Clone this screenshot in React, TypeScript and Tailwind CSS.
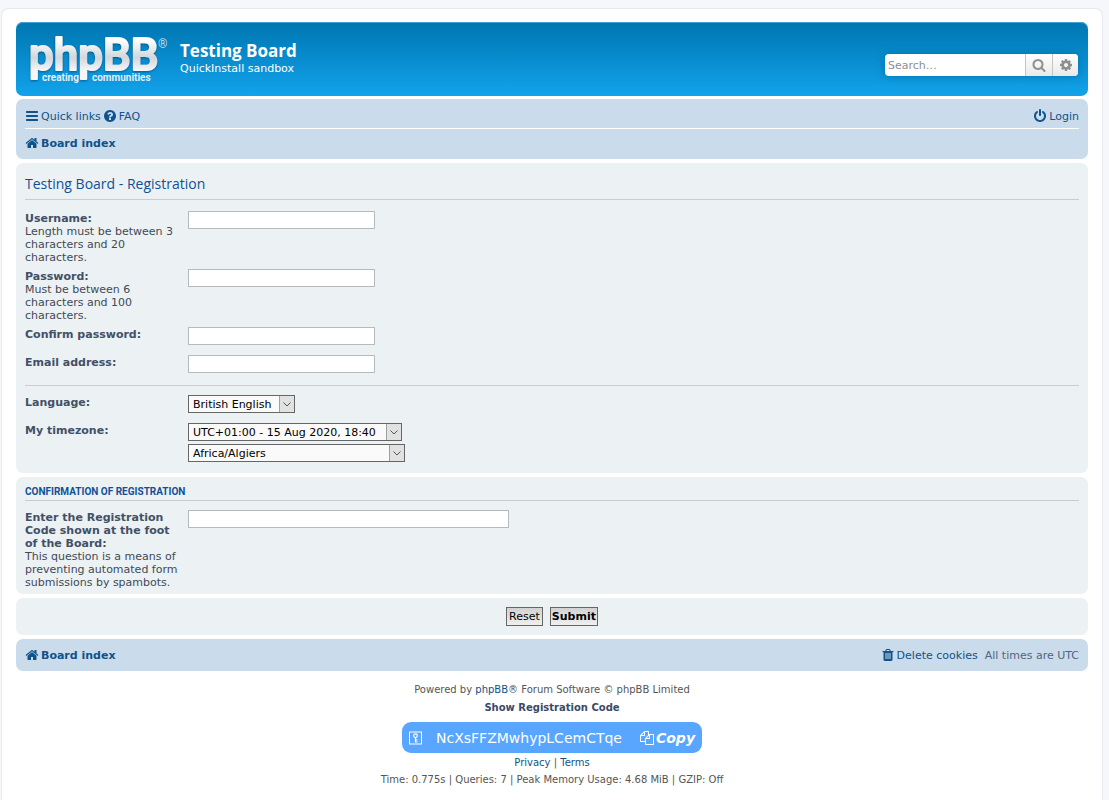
import React from "react";

const ICONS = {
  bars: "M1664 1344v128q0 26-19 45t-45 19h-1408q-26 0-45-19t-19-45v-128q0-26 19-45t45-19h1408q26 0 45 19t19 45zm0-512v128q0 26-19 45t-45 19h-1408q-26 0-45-19t-19-45v-128q0-26 19-45t45-19h1408q26 0 45 19t19 45zm0-512v128q0 26-19 45t-45 19h-1408q-26 0-45-19t-19-45v-128q0-26 19-45t45-19h1408q26 0 45 19t19 45z",
  home: "M1472 992v480q0 26-19 45t-45 19h-384v-384h-256v384h-384q-26 0-45-19t-19-45v-480q0-1 .5-3t.5-3l575-474 575 474q1 2 1 6zm223-69l-62 74q-8 9-21 11h-3q-13 0-21-7l-692-577-692 577q-12 8-24 7-13-2-21-11l-62-74q-8-10-7-23.5t11-21.5l719-599q32-26 76-26t76 26l244 204v-195q0-14 9-23t23-9h192q14 0 23 9t9 23v408l219 182q10 8 11 21.5t-7 23.5z",
  search: "M1216 832q0-185-131.5-316.5t-316.5-131.5-316.5 131.5-131.5 316.5 131.5 316.5 316.5 131.5 316.5-131.5 131.5-316.5zm512 832q0 52-38 90t-90 38q-54 0-90-38l-343-342q-179 124-399 124-143 0-273.5-55.5t-225-150-150-225-55.5-273.5 55.5-273.5 150-225 225-150 273.5-55.5 273.5 55.5 225 150 150 225 55.5 273.5q0 220-124 399l343 343q37 37 37 90z",
  cog: "M1152 896q0-106-75-181t-181-75-181 75-75 181 75 181 181 75 181-75 75-181zm512-109v222q0 12-8 23t-20 13l-185 28q-19 54-39 91 35 50 107 138 10 12 10 25t-9 23q-27 37-99 108t-94 71q-12 0-26-9l-138-108q-44 23-91 38-16 136-29 186-7 28-36 28h-222q-14 0-24.5-8.5t-11.5-21.5l-28-184q-49-16-90-37l-141 107q-10 9-25 9-14 0-25-11-126-114-165-168-7-10-7-23 0-12 8-23 15-21 51-66.5t54-70.5q-27-50-41-99l-183-27q-13-2-21-12.5t-8-23.5v-222q0-12 8-23t19-13l186-28q14-46 39-92-40-57-107-138-10-12-10-24 0-10 9-23 26-36 98.5-107.5t94.5-71.5q13 0 26 10l138 107q44-23 91-38 16-136 29-186 7-28 36-28h222q14 0 24.5 8.5t11.5 21.5l28 184q49 16 90 37l142-107q9-9 24-9 13 0 25 10 129 119 165 170 7 8 7 22 0 12-8 23-15 21-51 66.5t-54 70.5q26 50 41 98l183 28q13 2 21 12.5t8 23.5z",
  power: "M1664 896q0 156-61 298t-164 245-245 164-298 61-298-61-245-164-164-245-61-298q0-182 80.5-343t226.5-270q43-32 95.5-25t83.5 50q32 42 24.5 94.5t-49.5 84.5q-98 74-151.5 181t-53.5 228q0 104 40.5 198.5t109.5 163.5 163.5 109.5 198.5 40.5 198.5-40.5 163.5-109.5 109.5-163.5 40.5-198.5q0-121-53.5-228t-151.5-181q-42-32-49.5-84.5t24.5-94.5q31-43 84-50t95 25q146 109 226.5 270t80.5 343zm-640-768v640q0 52-38 90t-90 38-90-38-38-90v-640q0-52 38-90t90-38 90 38 38 90z",
  question: "M1024 1376v-192q0-14-9-23t-23-9h-192q-14 0-23 9t-9 23v192q0 14 9 23t23 9h192q14 0 23-9t9-23zm256-672q0-88-55.5-163t-138.5-116-170-41q-243 0-371 213-15 24 8 42l132 100q7 6 19 6 16 0 25-12 53-68 86-92 34-24 86-24 48 0 85.5 26t37.5 59q0 38-20 61t-68 45q-63 28-115.5 86.5t-52.5 125.5v36q0 14 9 23t23 9h192q14 0 23-9t9-23q0-19 21.5-49.5t54.5-49.5q32-18 49-28.5t46-35 44.5-48 28-60.5 12.5-81zm384 192q0 209-103 385.5t-279.5 279.5-385.5 103-385.5-103-279.5-279.5-103-385.5 103-385.5 279.5-279.5 385.5-103 385.5 103 279.5 279.5 103 385.5z",
  trash: "M704 1376v-704q0-14-9-23t-23-9h-64q-14 0-23 9t-9 23v704q0 14 9 23t23 9h64q14 0 23-9t9-23zm256 0v-704q0-14-9-23t-23-9h-64q-14 0-23 9t-9 23v704q0 14 9 23t23 9h64q14 0 23-9t9-23zm256 0v-704q0-14-9-23t-23-9h-64q-14 0-23 9t-9 23v704q0 14 9 23t23 9h64q14 0 23-9t9-23zm-544-992h448l-48-117q-7-9-17-11h-317q-10 2-17 11zm928 32v64q0 14-9 23t-23 9h-96v948q0 83-47 143.5t-113 60.5h-832q-66 0-113-58.5t-47-141.5v-952h-96q-14 0-23-9t-9-23v-64q0-14 9-23t23-9h309l70-167q15-37 54-63t79-26h320q40 0 79 26t54 63l70 167h309q14 0 23 9t9 23z",
  files: "M1696 384q40 0 68 28t28 68v1216q0 40-28 68t-68 28h-960q-40 0-68-28t-28-68v-288h-544q-40 0-68-28t-28-68v-672q0-40 20-88t48-76l408-408q28-28 76-48t88-20h416q40 0 68 28t28 68v328q68-40 128-40h416zm-544 213l-299 299h299v-299zm-640-384l-299 299h299v-299zm196 647l316-316v-416h-384v416q0 40-28 68t-68 28h-416v640h512v-256q0-40 20-88t48-76zm956 804v-1152h-384v416q0 40-28 68t-68 28h-416v640h896z",
};

const Icon = ({ name, className = "size-[14px]" }: { name: keyof typeof ICONS; className?: string }) => (
  <svg viewBox="0 0 1792 1792" fill="currentColor" aria-hidden="true" className={`shrink-0 ${className}`}>
    <path d={ICONS[name]} />
  </svg>
);

const KeyIcon = () => (
  <svg width="13" height="14" viewBox="0 0 13 14" fill="none" stroke="currentColor" aria-hidden="true" className="shrink-0">
    <rect x="0.5" y="1" width="12" height="12" />
    <circle cx="6.5" cy="4.7" r="1.8" strokeWidth="1.2" />
    <path d="M6.5 6.5V11.5M6.5 9H8.5M6.5 11H8.5" strokeWidth="1.2" />
  </svg>
);

const SiteLogo = () => (
  <svg width="141" height="62" viewBox="0 -5 141 62" role="img" aria-label="phpBB" className="shrink-0 font-['Roboto',sans-serif]">
    <defs>
      <linearGradient id="logo-fill" x1="0" y1="0" x2="0" y2="1">
        <stop offset="0.2" stopColor="#ffffff" />
        <stop offset="0.55" stopColor="#d3d7db" />
        <stop offset="0.8" stopColor="#f4f6f8" />
      </linearGradient>
      <filter id="logo-shadow" x="-5%" y="-5%" width="112%" height="120%">
        <feDropShadow dx="0" dy="1" stdDeviation="0.8" floodColor="#03406e" floodOpacity="0.7" />
      </filter>
    </defs>
    <g filter="url(#logo-shadow)">
      <text x="0" y="37" fontSize="44" fontWeight="500" fill="url(#logo-fill)" stroke="url(#logo-fill)" strokeWidth="2" strokeLinejoin="round" paintOrder="stroke">
        phpBB
      </text>
    </g>
    <text x="129" y="15" fontSize="12" fill="#b9d9ee">®</text>
    <g fontSize="10" fontWeight="700" fill="#e3eef6">
      <text x="13" y="48">creating</text>
      <text x="63" y="48">communities</text>
    </g>
  </svg>
);

const Field = ({ id, label, hint, children }: { id: string; label: string; hint?: string; children: React.ReactNode }) => (
  <div className="flex gap-[5px]">
    <dt className="w-[158px] shrink-0 pt-px leading-[13px] text-[#425067]">
      <label htmlFor={id} className="block font-bold">{label}</label>
      {hint && <span className="block text-[#3f4a57]">{hint}</span>}
    </dt>
    <dd className="flex min-h-[23px] flex-col items-start gap-[3px]">{children}</dd>
  </div>
);

const TextInput = ({ id, type = "text", className = "w-[187px]" }: { id: string; type?: string; className?: string }) => (
  <input id={id} name={id} type={type} className={`h-[18px] border border-[#b4bac0] bg-white px-1 ${className}`} />
);

const Select = ({ id, value, label, className }: { id: string; value: string; label?: string; className: string }) => (
  <div className={`relative h-[18px] ${className}`}>
    <select id={id} name={id} aria-label={label} className="block h-full w-full appearance-none border border-[#666666] bg-[#fafafa] pl-1 text-black">
      <option>{value}</option>
    </select>
    <span className="pointer-events-none absolute inset-y-px right-px flex w-[15px] items-center justify-center border-l border-[#a0a0a0] bg-[#e1e1e1]">
      <svg width="8" height="5" viewBox="0 0 8 5" fill="none" stroke="#555555" aria-hidden="true">
        <path d="M0.5 0.5L4 4L7.5 0.5" />
      </svg>
    </span>
  </div>
);

const Crumb = () => (
  <a href="#" className="flex items-center gap-[2px] font-bold text-[#105289] hover:underline">
    <Icon name="home" />
    Board index
  </a>
);

export default function App() {
  return (
    <div className="min-h-screen bg-[#f5f7fa] pt-2 pr-[6px] pl-[1px] font-['Verdana','DejaVu_Sans',sans-serif] text-[11px] leading-[13px] text-[#536482]">
      <div className="min-h-[calc(100vh-8px)] rounded-t-lg border border-b-0 border-[#e6e9ed] bg-white px-[14px] pt-[13px]">
        <header className="flex h-[74px] items-center justify-between rounded-[7px] bg-linear-to-b from-[#0076b1] to-[#12a3eb] pr-[10px] pl-[13px] text-white shadow-[inset_0_1px_0_#3fa5d8]">
          <div className="flex items-center gap-[10px]">
            <a href="#"><SiteLogo /></a>
            <div className="pb-1">
              <h1 className="font-['Trebuchet_MS','Open_Sans',sans-serif] text-[17px] leading-[22px] font-bold">Testing Board</h1>
              <p className="leading-[13px]">QuickInstall sandbox</p>
            </div>
          </div>
          <form role="search" className="mt-3 flex h-[22px] overflow-hidden rounded-[4px] bg-white text-[#8f8f8f] shadow-[0_0_8px_#0075b0]">
            <input type="search" aria-label="Search" placeholder="Search…" className="w-[140px] px-[3px] text-[#333333] placeholder:text-[#8f8f8f]" />
            <button type="button" aria-label="Search" className="flex w-[27px] items-center justify-center border-l border-[#c7c3bf] bg-linear-to-b from-white to-[#e9e9e9]">
              <Icon name="search" />
            </button>
            <button type="button" aria-label="Advanced search" className="flex w-[26px] items-center justify-center border-l border-[#c7c3bf] bg-linear-to-b from-white to-[#e9e9e9]">
              <Icon name="cog" />
            </button>
          </form>
        </header>

        <nav className="mt-[3px] h-[60px] rounded-[7px] bg-[#cadceb] px-[9px] pt-[3px] text-[#105289]">
          <div className="flex h-[27px] items-end justify-between border-b border-white pb-[5px]">
            <div className="flex gap-[2px]">
              <a href="#" className="flex items-center gap-[2px] hover:underline"><Icon name="bars" />Quick links</a>
              <a href="#" className="flex items-center gap-[2px] hover:underline"><Icon name="question" />FAQ</a>
            </div>
            <a href="#" className="flex items-center gap-[2px] hover:underline"><Icon name="power" />Login</a>
          </div>
          <div className="flex h-[28px] items-center">
            <Crumb />
          </div>
        </nav>

        <form>
          <section className="mt-1 rounded-[7px] bg-[#ecf1f3] px-[9px] pt-[11px] pb-[11px]">
            <h2 className="border-b border-[#cccccc] pb-[5px] font-['Trebuchet_MS','Open_Sans',sans-serif] text-[14px] leading-5 text-[#115098]">
              Testing Board - Registration
            </h2>
            <dl className="mt-[11px] flex flex-col gap-[5px]">
              <Field id="username" label="Username:" hint="Length must be between 3 characters and 20 characters.">
                <TextInput id="username" />
              </Field>
              <Field id="new_password" label="Password:" hint="Must be between 6 characters and 100 characters.">
                <TextInput id="new_password" type="password" />
              </Field>
              <Field id="password_confirm" label="Confirm password:">
                <TextInput id="password_confirm" type="password" />
              </Field>
              <Field id="email" label="Email address:">
                <TextInput id="email" type="email" />
              </Field>
            </dl>
            <hr className="mt-[7px] border-[#cccccc]" />
            <dl className="mt-[9px] flex flex-col gap-[5px]">
              <Field id="lang" label="Language:">
                <Select id="lang" value="British English" className="w-[107px]" />
              </Field>
              <Field id="tz_date" label="My timezone:">
                <Select id="tz_date" value="UTC+01:00 - 15 Aug 2020, 18:40" className="w-[214px]" />
                <Select id="timezone" label="Timezone" value="Africa/Algiers" className="w-[217px]" />
              </Field>
            </dl>
          </section>

          <section className="mt-1 rounded-[7px] bg-[#ecf1f3] px-[9px] pt-2 pb-[5px]">
            <h3 className="border-b border-[#cccccc] pb-[2px] font-['Roboto',sans-serif] text-[10px] leading-[13px] font-bold text-[#115098] uppercase">
              Confirmation of registration
            </h3>
            <dl className="mt-[9px]">
              <Field id="answer" label="Enter the Registration Code shown at the foot of the Board:" hint="This question is a means of preventing automated form submissions by spambots.">
                <TextInput id="answer" className="w-[321px]" />
              </Field>
            </dl>
          </section>

          <div className="mt-1 flex h-[37px] items-center justify-center gap-[7px] rounded-[7px] bg-[#ecf1f3] text-black">
            <button type="reset" className="h-[19px] border border-[#666666] bg-linear-to-b from-[#d2d2d2] to-[#efefef] px-[2px]">Reset</button>
            <button type="button" className="h-[19px] border border-[#666666] bg-linear-to-b from-[#d2d2d2] to-[#efefef] px-px font-bold">Submit</button>
          </div>
        </form>

        <div className="mt-1 flex h-8 items-center justify-between rounded-[7px] bg-[#cadceb] px-[9px]">
          <Crumb />
          <div className="flex items-center gap-[7px]">
            <a href="#" className="flex items-center gap-[2px] text-[#105289] hover:underline"><Icon name="trash" />Delete cookies</a>
            <span>All times are UTC</span>
          </div>
        </div>

        <footer className="flex flex-col items-center pt-3 text-[10px] text-[#555555]">
          <p>Powered by <a href="#" className="text-[#105289]">phpBB</a>® Forum Software © phpBB Limited</p>
          <p className="mt-[5px] font-bold text-[#3a4a66]">Show Registration Code</p>
          <div className="mt-2 flex h-[31px] items-center rounded-[9px] bg-[#58a6ff] px-[7px] text-[14px] leading-5 text-white">
            <KeyIcon />
            <span className="ml-[14px]">NcXsFFZMwhypLCemCTqe</span>
            <button type="button" className="ml-[18px] flex items-center gap-[2px] font-bold italic">
              <Icon name="files" />Copy
            </button>
          </div>
          <p className="mt-[3px]">
            <a href="#" className="text-[#105289]">Privacy</a> | <a href="#" className="text-[#105289]">Terms</a>
          </p>
          <p className="mt-1">Time: 0.775s | Queries: 7 | Peak Memory Usage: 4.68 MiB | GZIP: Off</p>
        </footer>
      </div>
    </div>
  );
}
